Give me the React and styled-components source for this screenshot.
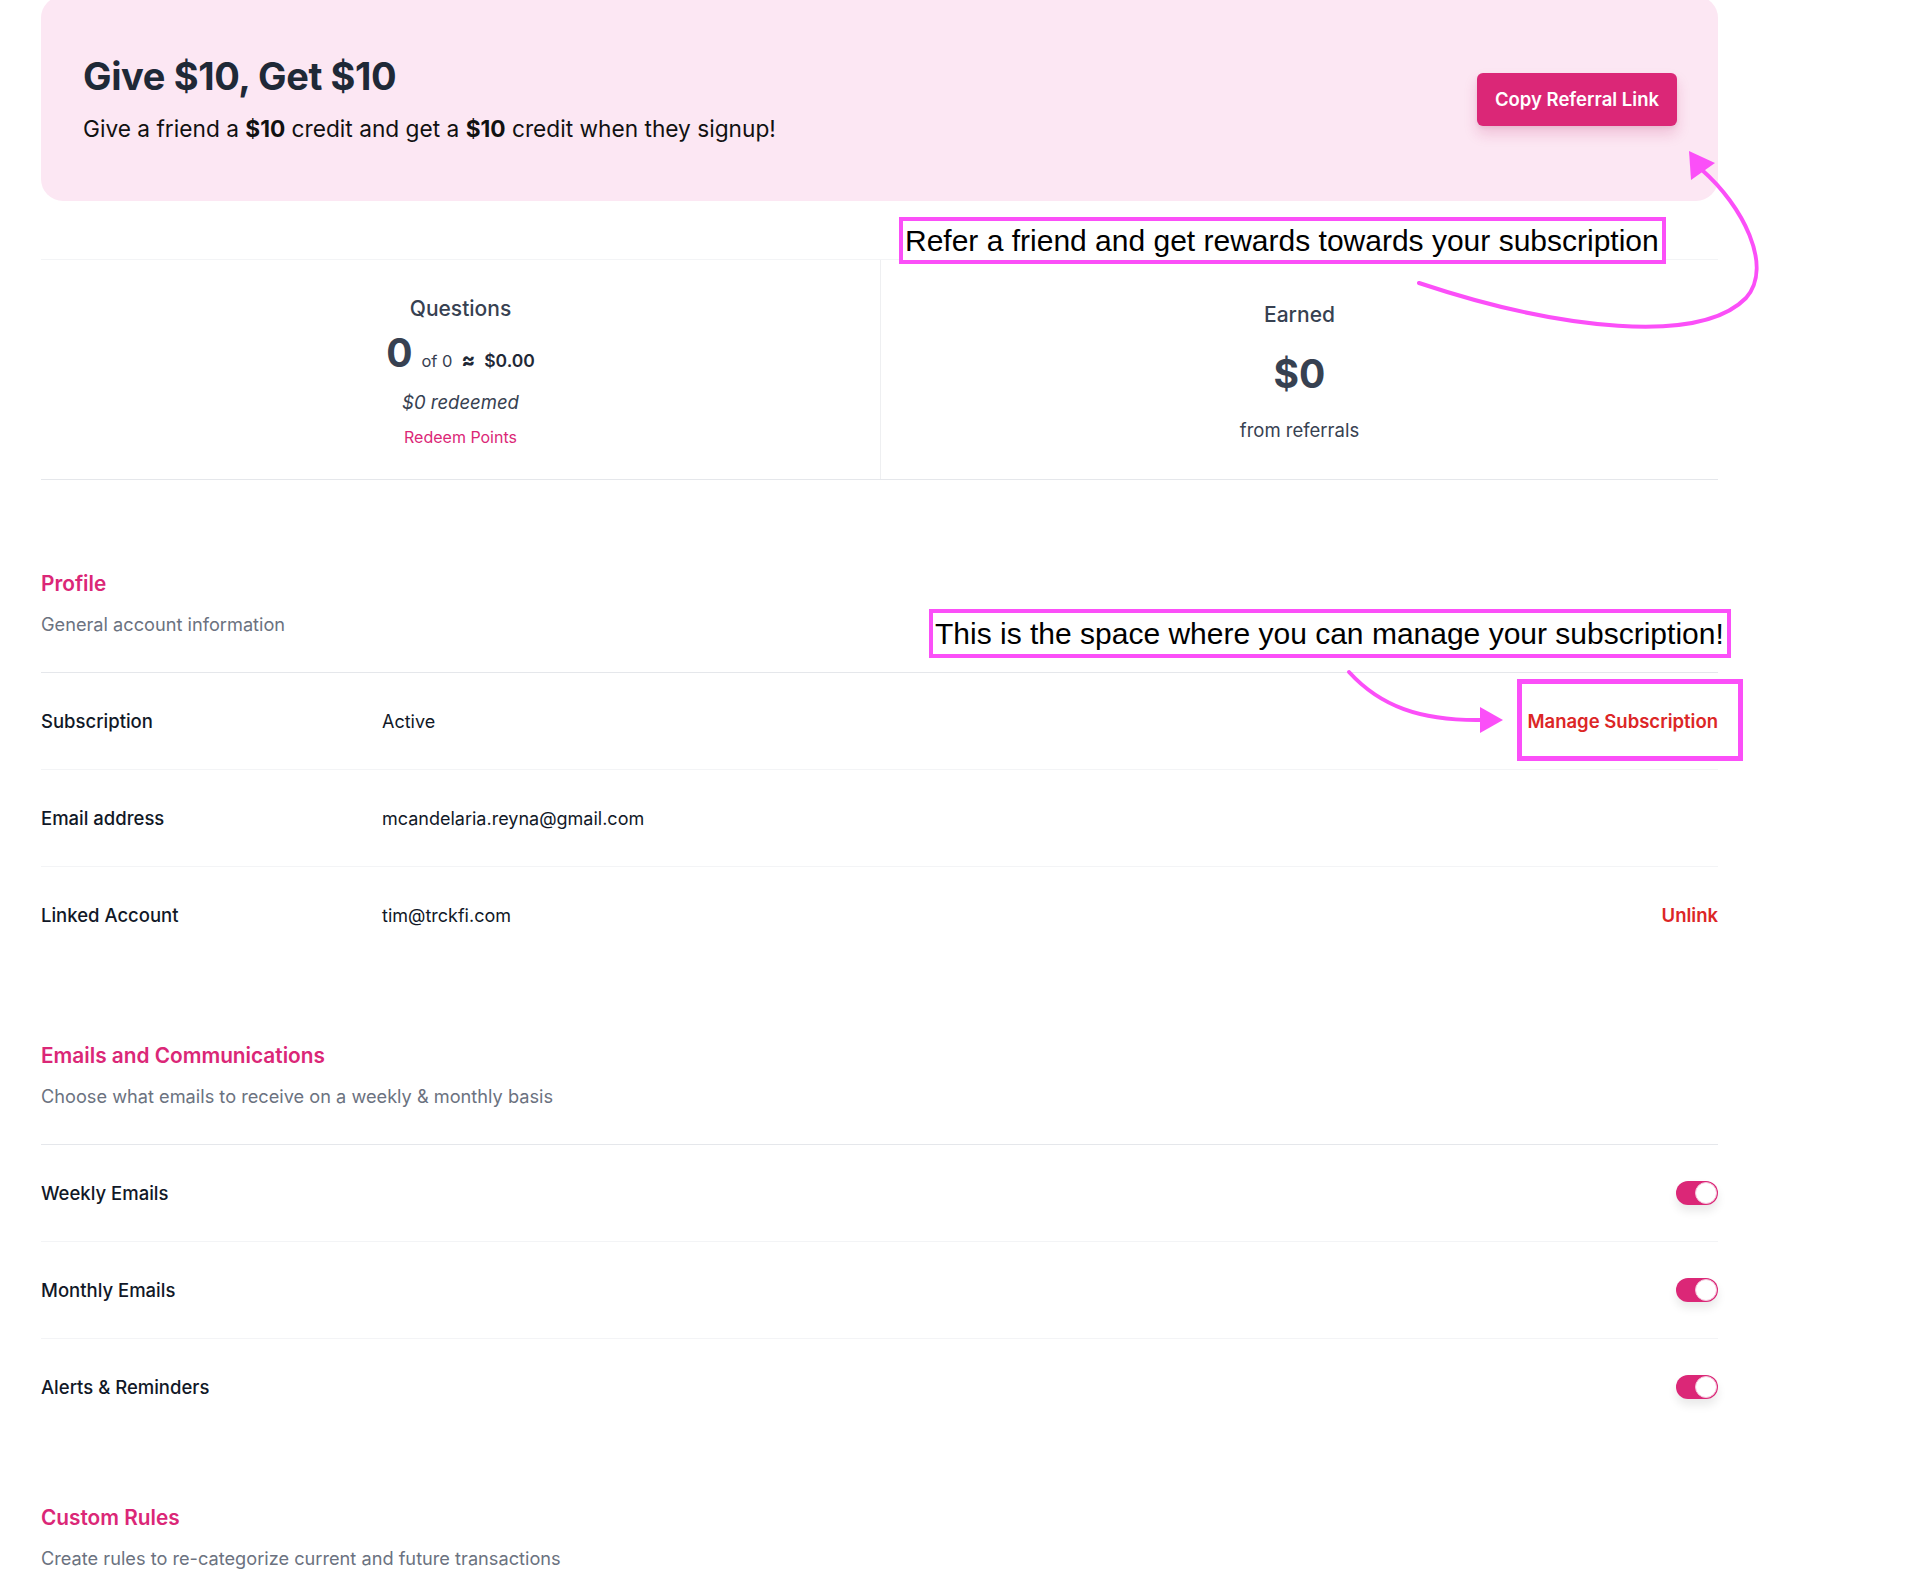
import React from "react"
import styled, { createGlobalStyle } from "styled-components"

const GlobalStyle = createGlobalStyle`
  * { box-sizing: border-box; }
  body {
    margin: 0;
    background: #ffffff;
    font-family: "Inter", "Liberation Sans", sans-serif;
    color: #111827;
  }
`

const PINK = "#db2777"
const RED = "#dc2626"
const MARK = "#fb4ff8"

function Toggle() {
  return (
    <Track>
      <Knob />
    </Track>
  )
}

function App() {
  return (
    <Page>
      <GlobalStyle />
      <Banner>
        <div>
          <BannerTitle>Give $10, Get $10</BannerTitle>
          <BannerText>
            Give a friend a <b>$10</b> credit and get a <b>$10</b> credit when they signup!
          </BannerText>
        </div>
        <CopyButton>Copy Referral Link</CopyButton>
      </Banner>

      <Stats>
        <StatColumn>
          <StatLabel>Questions</StatLabel>
          <PointsRow>
            <BigNumber>0</BigNumber>
            <Small>of 0</Small>
            <Strong $big>≈</Strong>
            <Strong>$0.00</Strong>
          </PointsRow>
          <Redeemed>$0 redeemed</Redeemed>
          <RedeemLink>Redeem Points</RedeemLink>
        </StatColumn>
        <StatColumn $divider>
          <StatLabel>Earned</StatLabel>
          <BigNumber $gap={23}>$0</BigNumber>
          <StatNote>from referrals</StatNote>
        </StatColumn>
      </Stats>

      <Section $top={90}>
        <SectionHead>
          <SectionTitle>Profile</SectionTitle>
          <SectionDesc>General account information</SectionDesc>
        </SectionHead>
        <Row>
          <RowLabel>Subscription</RowLabel>
          <RowValue>Active</RowValue>
          <RowAction>Manage Subscription</RowAction>
        </Row>
        <Row>
          <RowLabel>Email address</RowLabel>
          <RowValue>mcandelaria.reyna@gmail.com</RowValue>
        </Row>
        <Row>
          <RowLabel>Linked Account</RowLabel>
          <RowValue>tim@trckfi.com</RowValue>
          <RowAction>Unlink</RowAction>
        </Row>
      </Section>

      <Section $top={79}>
        <SectionHead>
          <SectionTitle>Emails and Communications</SectionTitle>
          <SectionDesc>Choose what emails to receive on a weekly &amp; monthly basis</SectionDesc>
        </SectionHead>
        <Row>
          <RowLabel>Weekly Emails</RowLabel>
          <RowValue />
          <Toggle />
        </Row>
        <Row>
          <RowLabel>Monthly Emails</RowLabel>
          <RowValue />
          <Toggle />
        </Row>
        <Row>
          <RowLabel>Alerts &amp; Reminders</RowLabel>
          <RowValue />
          <Toggle />
        </Row>
      </Section>

      <Section $top={69}>
        <SectionTitle>Custom Rules</SectionTitle>
        <SectionDesc>Create rules to re-categorize current and future transactions</SectionDesc>
      </Section>

      <Note style={{ left: 899, top: 217, width: 767, height: 47 }}>
        Refer a friend and get rewards towards your subscription
      </Note>
      <Note style={{ left: 929, top: 609, width: 802, height: 49 }}>
        This is the space where you can manage your subscription!
      </Note>
      <Frame style={{ left: 1517, top: 679, width: 226, height: 82 }} />

      <Arrows viewBox="0 0 1924 1594" width="1924" height="1594">
        <path
          d="M1419 283 C1560 330, 1700 345, 1746 298 C1774 266, 1742 205, 1702 170"
          fill="none"
          stroke={MARK}
          strokeWidth="4"
          strokeLinecap="round"
        />
        <polygon points="1689,151 1691,180 1715,163" fill={MARK} />
        <path
          d="M1349 672 C1380 706, 1420 721, 1482 720"
          fill="none"
          stroke={MARK}
          strokeWidth="4"
          strokeLinecap="round"
        />
        <polygon points="1503,720 1480,707 1480,733" fill={MARK} />
      </Arrows>
    </Page>
  )
}
export default App

const Page = styled.div`
  position: relative;
  width: 1924px;
  min-height: 1594px;
  padding: 0 206px 40px 41px;
  overflow: hidden;
`

const Banner = styled.div`
  margin-top: -4px;
  height: 205px;
  background: #fce7f3;
  border-radius: 22px;
  padding: 0 41px 0 42px;
  display: flex;
  align-items: center;
  justify-content: space-between;
`

const BannerTitle = styled.h1`
  margin: 0;
  font-size: 38px;
  line-height: 44px;
  font-weight: 700;
  letter-spacing: -0.01em;
  color: #1f2937;
`

const BannerText = styled.p`
  margin: 16px 0 0;
  font-size: 22.7px;
  line-height: 30px;
  color: #111111;

  b {
    font-weight: 700;
  }
`

const CopyButton = styled.button`
  margin-top: 1px;
  height: 53px;
  padding: 0 18px;
  border: none;
  border-radius: 6px;
  background: ${PINK};
  color: #ffffff;
  font-family: inherit;
  font-size: 18.5px;
  font-weight: 600;
  box-shadow: 0 8px 14px rgba(190, 24, 93, 0.18), 0 2px 4px rgba(0, 0, 0, 0.06);
  cursor: pointer;
`

const Stats = styled.div`
  margin-top: 58px;
  height: 221px;
  display: grid;
  grid-template-columns: 839px 1fr;
  border-top: 1px solid #f3f4f6;
  border-bottom: 1px solid #e5e7eb;
`

const StatColumn = styled.div`
  display: flex;
  flex-direction: column;
  align-items: center;
  justify-content: center;
  padding-top: 5px;
  border-left: ${(p) => (p.$divider ? "1px solid #eeeff1" : "none")};
  color: #374151;
`

const StatLabel = styled.div`
  font-size: 21px;
  line-height: 28px;
  font-weight: 500;
  color: #374151;
`

const PointsRow = styled.div`
  margin-top: 8px;
  display: flex;
  align-items: baseline;
  gap: 9px;
  color: #1f2937;
`

const BigNumber = styled.span`
  margin-top: ${(p) => (p.$gap ? `${p.$gap}px` : "0")};
  font-size: 39px;
  line-height: 44px;
  font-weight: 700;
  color: #374151;
`

const Small = styled.span`
  font-size: 16.5px;
  color: #374151;
`

const Strong = styled.span`
  font-size: ${(p) => (p.$big ? "20px" : "17.5px")};
  font-weight: ${(p) => (p.$big ? 800 : 600)};
  color: #1f2937;
`

const Redeemed = styled.div`
  margin-top: 14px;
  font-size: 18.5px;
  line-height: 26px;
  font-style: italic;
  color: #374151;
`

const RedeemLink = styled.a`
  margin-top: 10px;
  font-size: 16px;
  line-height: 24px;
  color: ${PINK};
  cursor: pointer;
`

const StatNote = styled.div`
  margin-top: 21px;
  font-size: 18.5px;
  line-height: 26px;
  color: #374151;
`

const Section = styled.section`
  margin-top: ${(p) => p.$top}px;
`

const SectionHead = styled.div`
  padding-bottom: 35px;
  border-bottom: 1px solid #e5e7eb;
`

const SectionTitle = styled.h2`
  margin: 0;
  font-size: 20.8px;
  line-height: 28px;
  font-weight: 600;
  color: ${PINK};
`

const SectionDesc = styled.p`
  margin: 13px 0 0;
  font-size: 18.2px;
  line-height: 26px;
  color: #6b7280;
`

const Row = styled.div`
  height: 96px;
  display: grid;
  grid-template-columns: 341px 1fr auto;
  align-items: center;

  & + & {
    height: 97px;
    border-top: 1px solid #f3f4f6;
  }
`

const RowLabel = styled.div`
  font-size: 18.5px;
  font-weight: 500;
  color: #111827;
`

const RowValue = styled.div`
  font-size: 18px;
  color: #111827;
`

const RowAction = styled.a`
  font-size: 18.5px;
  font-weight: 600;
  color: ${RED};
  cursor: pointer;
`

const Track = styled.div`
  position: relative;
  width: 42px;
  height: 24px;
  border-radius: 12px;
  background: ${PINK};
  box-shadow: 0 6px 10px rgba(0, 0, 0, 0.09);
`

const Knob = styled.span`
  position: absolute;
  top: 1px;
  right: 1px;
  width: 22px;
  height: 22px;
  border-radius: 50%;
  background: #ffffff;
  border: 1px solid #f3c4da;
`

const Note = styled.div`
  position: absolute;
  border: 4px solid ${MARK};
  background: #ffffff;
  padding: 0 2px;
  display: flex;
  align-items: center;
  font-family: "Liberation Sans", Arial, sans-serif;
  font-size: 30px;
  color: #000000;
  white-space: nowrap;
`

const Frame = styled.div`
  position: absolute;
  border: 5px solid ${MARK};
`

const Arrows = styled.svg`
  position: absolute;
  top: 0;
  left: 0;
  pointer-events: none;
`
